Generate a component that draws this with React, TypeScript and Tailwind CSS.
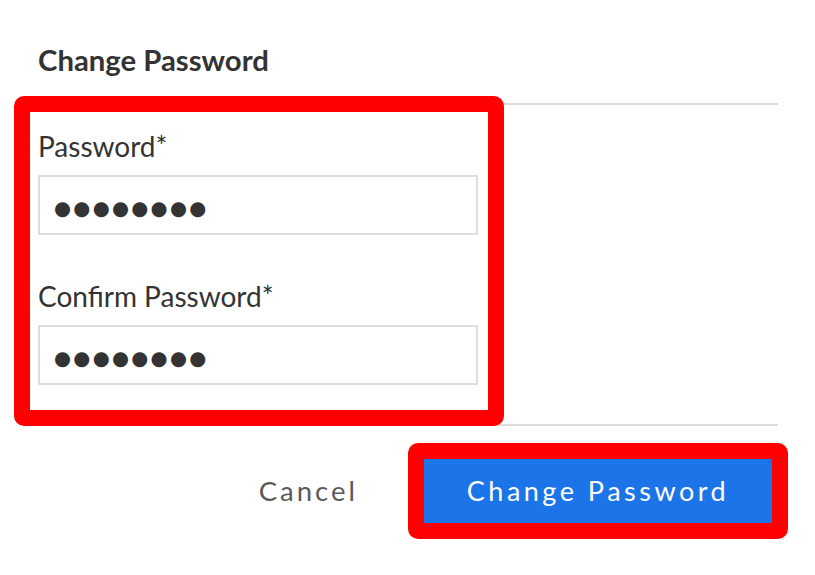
import React from 'react';

// Change password form with red annotation boxes
export default function App() {
  const [password, setPassword] = React.useState('●●●●●●●●');
  const [confirm, setConfirm] = React.useState('●●●●●●●●');

  return (
    <div className="w-[815px] h-[575px] bg-white font-['Lato',sans-serif] text-[#333333] overflow-hidden">
      <div className="w-[740px] ml-[38px]">
        <h2 className="pt-[43px] text-[29.3px] leading-[34px] font-bold">Change Password</h2>
        <div className="mt-[26px] h-[2px] bg-[#dcdcdc]" />

        <div className="relative pt-[25px] pb-[39px]">
          <div className="absolute left-[-24px] top-[-9px] w-[490px] h-[330px] border-[16px] border-[#ff0000] rounded-[10px] pointer-events-none" />
          <label className="block text-[28px] leading-[32px] mb-[13px]">Password*</label>
          <input
            type="text"
            value={password}
            onChange={(e) => setPassword(e.target.value)}
            className="block w-[440px] h-[60px] border-2 border-[#dedede] pl-[14px] pt-[7px] font-['DejaVu_Sans',sans-serif] text-[19.5px] tracking-[2.3px] text-[#333333] outline-none"
          />
          <label className="block mt-[45px] text-[28px] leading-[32px] mb-[13px]">Confirm Password*</label>
          <input
            type="text"
            value={confirm}
            onChange={(e) => setConfirm(e.target.value)}
            className="block w-[440px] h-[60px] border-2 border-[#dedede] pl-[14px] pt-[7px] font-['DejaVu_Sans',sans-serif] text-[19.5px] tracking-[2.3px] text-[#333333] outline-none"
          />
        </div>

        <div className="h-[2px] bg-[#dcdcdc]" />

        <div className="flex justify-end items-center pt-[33px] pr-[6px]">
          <button className="text-[27.5px] tracking-[3px] text-[#5a5a5a] mr-[66px]">Cancel</button>
          <div className="relative">
            <div className="absolute -inset-4 border-[16px] border-[#ff0000] rounded-[10px] pointer-events-none" />
            <button className="w-[348px] h-[64px] bg-[#1c74e9] text-white text-[27px] tracking-[3.5px]">
              Change Password
            </button>
          </div>
        </div>
      </div>
    </div>
  );
}
